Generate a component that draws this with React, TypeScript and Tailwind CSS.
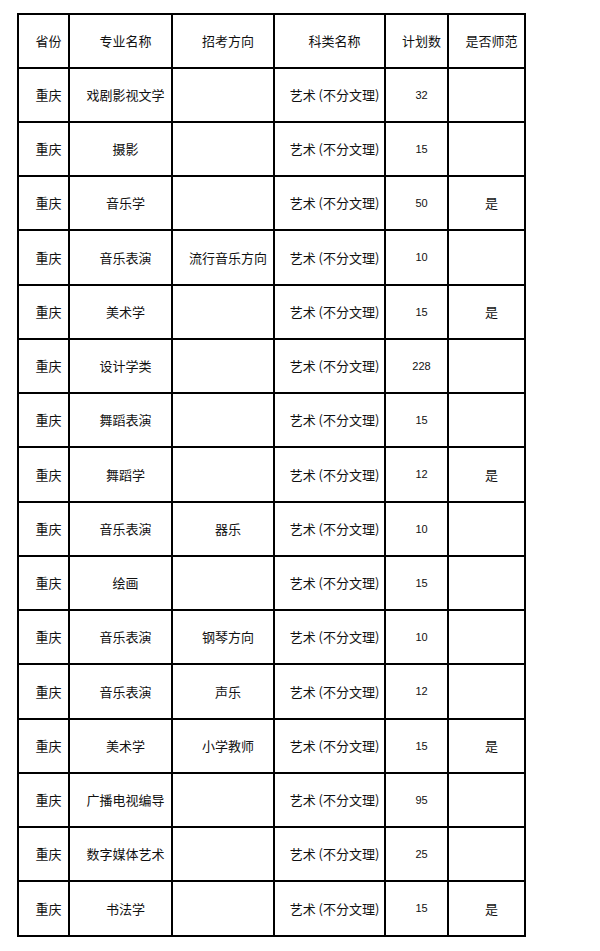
const headers = ['省份', '专业名称', '招考方向', '科类名称', '计划数', '是否师范']

type Row = {
  major: string
  direction: string
  plan: string
  normal: string
}

const rows: Row[] = [
  { major: '戏剧影视文学', direction: '', plan: '32', normal: '' },
  { major: '摄影', direction: '', plan: '15', normal: '' },
  { major: '音乐学', direction: '', plan: '50', normal: '是' },
  { major: '音乐表演', direction: '流行音乐方向', plan: '10', normal: '' },
  { major: '美术学', direction: '', plan: '15', normal: '是' },
  { major: '设计学类', direction: '', plan: '228', normal: '' },
  { major: '舞蹈表演', direction: '', plan: '15', normal: '' },
  { major: '舞蹈学', direction: '', plan: '12', normal: '是' },
  { major: '音乐表演', direction: '器乐', plan: '10', normal: '' },
  { major: '绘画', direction: '', plan: '15', normal: '' },
  { major: '音乐表演', direction: '钢琴方向', plan: '10', normal: '' },
  { major: '音乐表演', direction: '声乐', plan: '12', normal: '' },
  { major: '美术学', direction: '小学教师', plan: '15', normal: '是' },
  { major: '广播电视编导', direction: '', plan: '95', normal: '' },
  { major: '数字媒体艺术', direction: '', plan: '25', normal: '' },
  { major: '书法学', direction: '', plan: '15', normal: '是' },
]

// rows 4, 8, 12, 16 get one extra pixel so the grid lines land where the screenshot has them
const tallRows = [3, 7, 11, 15]

function Cell({ children, num, tall }: { children?: React.ReactNode; num?: boolean; tall?: boolean }) {
  return (
    <div
      className={`flex items-center justify-center bg-white pl-[10px] whitespace-nowrap text-[#111] ${
        tall ? 'h-[53px]' : 'h-[52px]'
      } ${num ? "font-['Liberation_Sans',sans-serif] text-[11px]" : 'text-[13px]'}`}
    >
      {children}
    </div>
  )
}

export default function App() {
  return (
    <div className="min-h-[951px] w-[600px] bg-white pt-[13px] pl-[17px] font-['Noto_Sans_CJK_SC',sans-serif]">
      <div className="grid w-[509px] grid-cols-[49px_101px_100px_109px_61px_75px] gap-[2px] border-2 border-black bg-black">
        {headers.map((h) => (
          <Cell key={h}>{h}</Cell>
        ))}
        {rows.map((r, i) => {
          const tall = tallRows.includes(i)
          return [
            <Cell key={`p${i}`} tall={tall}>重庆</Cell>,
            <Cell key={`m${i}`} tall={tall}>{r.major}</Cell>,
            <Cell key={`d${i}`} tall={tall}>{r.direction}</Cell>,
            <Cell key={`k${i}`} tall={tall}>艺术 (不分文理)</Cell>,
            <Cell key={`n${i}`} tall={tall} num>{r.plan}</Cell>,
            <Cell key={`s${i}`} tall={tall}>{r.normal}</Cell>,
          ]
        })}
      </div>
    </div>
  )
}
